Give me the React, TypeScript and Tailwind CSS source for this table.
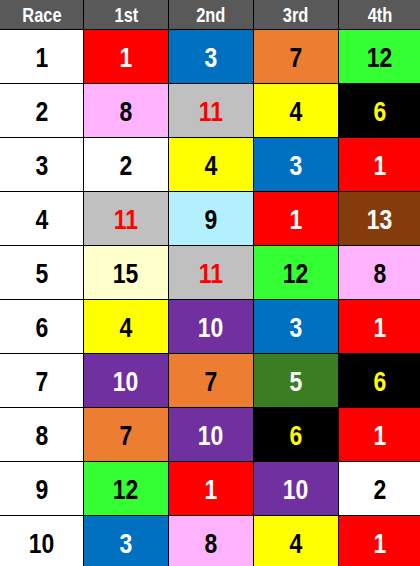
import { Fragment } from "react";

const headers = ["Race", "1st", "2nd", "3rd", "4th"];

type Cell = { n: number; bg: string; fg: string };

const red = (n: number): Cell => ({ n, bg: "bg-[#ff0000]", fg: "text-white" });
const blue = (n: number): Cell => ({ n, bg: "bg-[#0070c0]", fg: "text-white" });
const orange = (n: number): Cell => ({ n, bg: "bg-[#ed7d31]", fg: "text-black" });
const green = (n: number): Cell => ({ n, bg: "bg-[#33ff33]", fg: "text-black" });
const pink = (n: number): Cell => ({ n, bg: "bg-[#ffb3ff]", fg: "text-black" });
const gray = (n: number): Cell => ({ n, bg: "bg-[#c0c0c0]", fg: "text-[#ff0000]" });
const yellow = (n: number): Cell => ({ n, bg: "bg-[#ffff00]", fg: "text-black" });
const black = (n: number): Cell => ({ n, bg: "bg-black", fg: "text-[#ffff00]" });
const white = (n: number): Cell => ({ n, bg: "bg-white", fg: "text-black" });
const cyan = (n: number): Cell => ({ n, bg: "bg-[#b3f0ff]", fg: "text-black" });
const brown = (n: number): Cell => ({ n, bg: "bg-[#843c0c]", fg: "text-white" });
const cream = (n: number): Cell => ({ n, bg: "bg-[#ffffcc]", fg: "text-black" });
const purple = (n: number): Cell => ({ n, bg: "bg-[#7030a0]", fg: "text-white" });
const olive = (n: number): Cell => ({ n, bg: "bg-[#3b7d23]", fg: "text-white" });

const rows: Cell[][] = [
  [red(1), blue(3), orange(7), green(12)],
  [pink(8), gray(11), yellow(4), black(6)],
  [white(2), yellow(4), blue(3), red(1)],
  [gray(11), cyan(9), red(1), brown(13)],
  [cream(15), gray(11), green(12), pink(8)],
  [yellow(4), purple(10), blue(3), red(1)],
  [purple(10), orange(7), olive(5), black(6)],
  [orange(7), purple(10), black(6), red(1)],
  [green(12), red(1), purple(10), white(2)],
  [blue(3), pink(8), yellow(4), red(1)],
];

// Arial Narrow look: squeeze Liberation Sans horizontally
const Narrow = ({ children }: { children: React.ReactNode }) => (
  <span className="inline-block scale-x-[0.82]">{children}</span>
);

export default function App() {
  return (
    <div className="w-[420px] h-[566px] overflow-hidden bg-white font-['Liberation_Sans',Arial,sans-serif] font-bold">
      <div className="grid grid-cols-[83px_84px_84px_84px_1fr] grid-rows-[29px] auto-rows-[53px] gap-px bg-black">
        {headers.map((h) => (
          <div key={h} className="bg-[#595959] text-white text-[20px] flex items-center justify-center">
            <Narrow>{h}</Narrow>
          </div>
        ))}
        {rows.map((r, i) => (
          <Fragment key={i}>
            <div className="bg-white text-black text-[28px] flex items-center justify-center pt-[2px]">
              <Narrow>{i + 1}</Narrow>
            </div>
            {r.map((c, j) => (
              <div key={j} className={`${c.bg} ${c.fg} text-[28px] flex items-center justify-center pt-[2px]`}>
                <Narrow>{c.n}</Narrow>
              </div>
            ))}
          </Fragment>
        ))}
      </div>
    </div>
  );
}
